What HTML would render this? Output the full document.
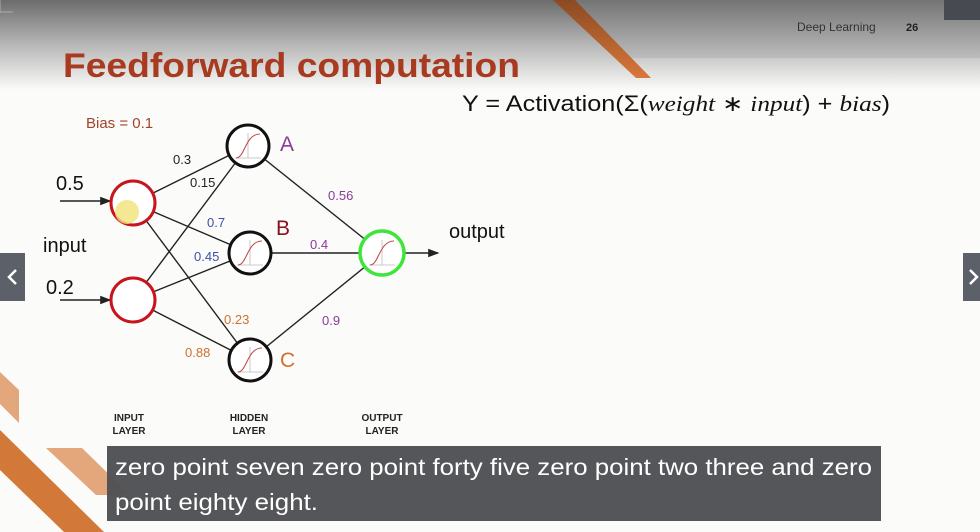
<!DOCTYPE html>
<html><head><meta charset="utf-8"><style>
html,body{margin:0;padding:0;width:980px;height:532px;overflow:hidden;background:#fbfbfa;font-family:"Liberation Sans",sans-serif}
.abs{position:absolute}
</style></head><body>
<svg class="abs" style="left:0;top:0" width="980" height="532" viewBox="0 0 980 532">
<defs>
<linearGradient id="tg" x1="0" y1="0" x2="0" y2="1">
<stop offset="0" stop-color="#6c6c6c"/><stop offset="0.45" stop-color="#b0b0b0"/><stop offset="1" stop-color="#fbfbfa"/></linearGradient>
<linearGradient id="rg" x1="0" y1="0" x2="0" y2="1">
<stop offset="0" stop-color="#747474"/><stop offset="1" stop-color="#bcbcbc"/></linearGradient>
<linearGradient id="og" x1="0" y1="0" x2="0" y2="1">
<stop offset="0" stop-color="#8a4a22"/><stop offset="1" stop-color="#d8773a"/></linearGradient>
<marker id="ar" markerWidth="8" markerHeight="8" refX="7" refY="4" orient="auto"><path d="M0,1 L8,4 L0,7 Z" fill="#222"/></marker>
</defs>
<rect x="0" y="0" width="980" height="90" fill="url(#tg)"/>
<polygon points="560,0 980,0 980,58 620,58" fill="url(#rg)"/>
<polygon points="553,0 575,0 651,78 636,78" fill="url(#og)"/>
<polygon points="0,372 19,390 19,423 0,404" fill="#e4a77b"/>
<polygon points="46,448 82,448 130,495 96,495" fill="#e4a77b"/>
<polygon points="0,430 104,532 64,532 0,470" fill="#d27838"/>
<rect x="944" y="0" width="36" height="20" fill="#474a51"/>
<rect x="0" y="253" width="25" height="48" fill="#5c6068"/>
<rect x="963" y="253" width="17" height="48" fill="#5c6068"/>
<path d="M16,270 L9,277 L16,284" stroke="#fff" stroke-width="2.5" fill="none"/>
<path d="M970,270 L977,277 L970,284" stroke="#fff" stroke-width="2.5" fill="none"/>
<g stroke="#222" stroke-width="1.4">
<line x1="133" y1="203" x2="248" y2="146"/><line x1="133" y1="203" x2="250" y2="253"/><line x1="133" y1="203" x2="250" y2="360"/>
<line x1="133" y1="300" x2="248" y2="146"/><line x1="133" y1="300" x2="250" y2="253"/><line x1="133" y1="300" x2="250" y2="360"/>
<line x1="248" y1="146" x2="382" y2="253"/><line x1="250" y1="253" x2="382" y2="253"/><line x1="250" y1="360" x2="382" y2="253"/>
<line x1="60" y1="201" x2="110" y2="201" marker-end="url(#ar)"/>
<line x1="60" y1="300" x2="110" y2="300" marker-end="url(#ar)"/>
<line x1="405" y1="253" x2="438" y2="253" marker-end="url(#ar)"/>
</g>
<g fill="#fff" stroke-width="3">
<circle cx="133" cy="203" r="22" stroke="#c8141c"/>
<circle cx="133" cy="300" r="22" stroke="#c8141c"/>
<circle cx="248" cy="146" r="21" stroke="#111"/>
<circle cx="250" cy="253" r="21" stroke="#111"/>
<circle cx="250" cy="360" r="21" stroke="#111"/>
<circle cx="382" cy="253" r="22" stroke="#3ee63a" stroke-width="3.5"/>
</g>
<circle cx="127" cy="212" r="12" fill="#f3e27a" opacity="0.8"/>
<g fill="none">
<g id="sg"><path d="M-13,12 L13,12 M0,-13 L0,12" stroke="#bbb" stroke-width="0.8"/><path d="M-12,12 C-3,12 -3,-12 12,-12" stroke="#c0504d" stroke-width="1.1"/></g>
<use href="#sg" x="248" y="146"/><use href="#sg" x="250" y="253"/><use href="#sg" x="250" y="360"/><use href="#sg" x="382" y="253"/>
</g>
<g font-family="Liberation Sans, sans-serif">
<text x="63" y="77" font-size="34" font-weight="bold" fill="#a83a20" textLength="457" lengthAdjust="spacingAndGlyphs">Feedforward computation</text>
<text x="797" y="31" font-size="12" fill="#333">Deep Learning</text>
<text x="906" y="31" font-size="11" font-weight="bold" fill="#222">26</text>
<text x="462" y="111" font-size="22" fill="#111" textLength="428" lengthAdjust="spacingAndGlyphs">Y = Activation(Σ(<tspan font-family="Liberation Serif" font-style="italic">weight</tspan> ∗ <tspan font-family="Liberation Serif" font-style="italic">input</tspan>) + <tspan font-family="Liberation Serif" font-style="italic">bias</tspan>)</text>
<text x="86" y="128" font-size="15" fill="#a0442a">Bias = 0.1</text>
<text x="56" y="190" font-size="20" fill="#111">0.5</text>
<text x="43" y="252" font-size="20" fill="#111">input</text>
<text x="46" y="294" font-size="20" fill="#111">0.2</text>
<text x="449" y="238" font-size="20" fill="#111">output</text>
<text x="280" y="151" font-size="21" fill="#8a3a9a">A</text>
<text x="276" y="235" font-size="21" fill="#8a1020">B</text>
<text x="280" y="367" font-size="21" fill="#d07030">C</text>
<g font-size="13">
<text x="173" y="164" fill="#222">0.3</text>
<text x="190" y="187" fill="#222">0.15</text>
<text x="207" y="227" fill="#3f4fa8">0.7</text>
<text x="194" y="261" fill="#3f4fa8">0.45</text>
<text x="224" y="324" fill="#d07030">0.23</text>
<text x="185" y="357" fill="#d07030">0.88</text>
<text x="328" y="200" fill="#8a3a9a">0.56</text>
<text x="310" y="249" fill="#8a3a9a">0.4</text>
<text x="322" y="325" fill="#8a3a9a">0.9</text>
</g>
<g font-size="10" font-weight="bold" fill="#222" text-anchor="middle">
<text x="129" y="421">INPUT</text><text x="129" y="434">LAYER</text>
<text x="249" y="421">HIDDEN</text><text x="249" y="434">LAYER</text>
<text x="382" y="421">OUTPUT</text><text x="382" y="434">LAYER</text>
</g>
</g>
<rect x="107" y="446" width="774" height="75" fill="#505155" opacity="0.97"/>
<g font-family="Liberation Sans, sans-serif" font-size="23" fill="#fff">
<text x="115" y="475" textLength="757" lengthAdjust="spacingAndGlyphs">zero point seven zero point forty five zero point two three and zero</text>
<text x="115" y="510" textLength="203" lengthAdjust="spacingAndGlyphs">point eighty eight.</text>
</g>
</svg>
</body></html>
